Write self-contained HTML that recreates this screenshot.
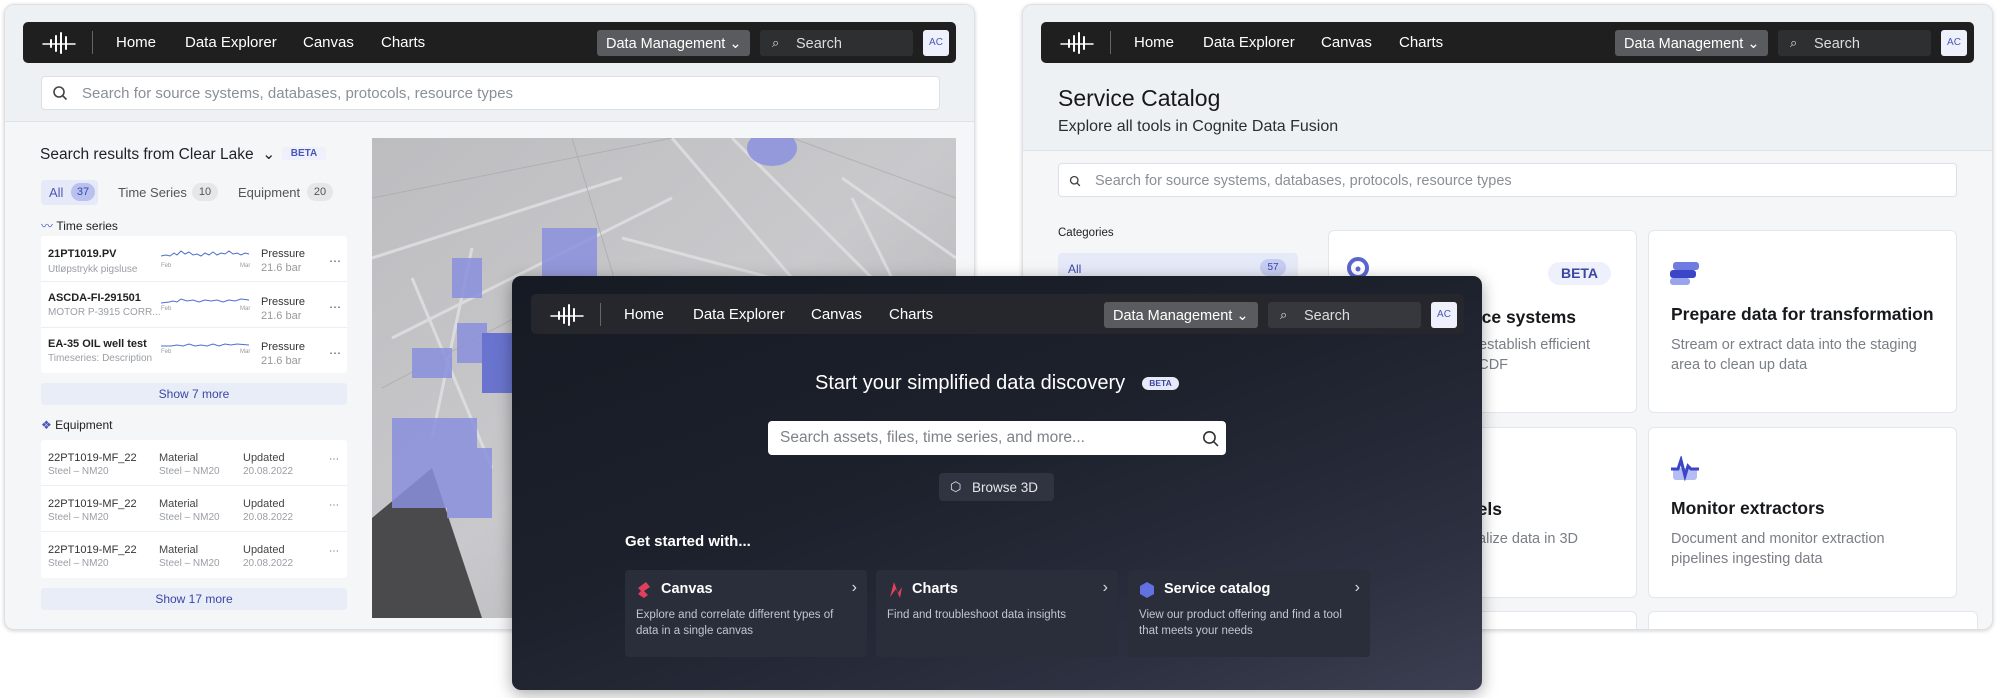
<!DOCTYPE html>
<html><head><meta charset="utf-8"><style>
*{box-sizing:border-box;margin:0;padding:0}
body{width:2000px;height:698px;background:#fff;position:relative;overflow:hidden;font-family:"Liberation Sans",sans-serif;color:#1f2328}
.a{position:absolute}
.win{position:absolute;border-radius:10px;overflow:hidden;box-shadow:0 1px 4px rgba(0,0,0,.18);border:1px solid #dde0e4}
.nav{position:absolute;background:#1f1f20;border-radius:5px;height:41px;color:#fff;font-size:15px}
.nav .t{position:absolute;top:12px;white-space:nowrap}
.dm{position:absolute;top:8px;height:26px;background:#5a5b5e;border-radius:3px;color:#fff;font-size:14.5px;padding:6px 9px;white-space:nowrap}
.srch{position:absolute;top:8px;height:26px;background:#2e2f31;border-radius:3px;font-size:14.5px;color:#ddd;padding:6px 0 0 36px}
.ac{position:absolute;top:8px;width:26px;height:26px;background:#eef0fb;border-radius:3px;color:#4a57b8;font-size:10px;text-align:center;line-height:26px}
.sb{position:absolute;background:#fff;border:1px solid #dcdfe3;border-radius:4px;color:#8a8f96;font-size:15px}
.row{position:absolute;left:0;right:0;height:46px;border-bottom:1px solid #eceef0}
.n{position:absolute;font-size:11px;color:#222;font-weight:bold;white-space:nowrap}
.s{position:absolute;font-size:10px;color:#9a9ea4;white-space:nowrap}
.card{position:absolute;background:#fff;border:1px solid #e3e6ea;border-radius:6px;overflow:hidden}
.ct{position:absolute;left:22px;font-size:17.5px;font-weight:bold;color:#16181c;white-space:nowrap}
.cd{position:absolute;left:22px;font-size:14.5px;color:#7a7e85;line-height:20px;white-space:nowrap}
.dc{position:absolute;background:#2a2e3a;border-radius:4px;width:242px;height:87px;top:570px}
.dc .tt{position:absolute;left:36px;top:11px;color:#fff;font-size:14.5px;font-weight:bold}
.dc .dd{position:absolute;left:11px;top:37px;color:#c3c6ce;font-size:11.5px;line-height:16px;width:220px}
.dc .ch{position:absolute;right:10px;top:9px;color:#ddd;font-size:16px}
</style></head><body>

<!-- LEFT WINDOW -->
<div class="win" style="left:4px;top:4px;width:971px;height:626px;background:#f5f6f8">
  <div class="a" style="left:0;top:0;width:971px;height:117px;background:#eef1f4;border-bottom:1px solid #dfe2e6"></div>
  <div class="nav" style="left:18px;top:17px;width:933px">
    <svg class="a" style="left:18px;top:9px" width="38" height="24" viewBox="0 0 38 24"><g stroke="#fff" stroke-width="2" stroke-linecap="round"><line x1="10" y1="9" x2="10" y2="16"/><line x1="15" y1="5" x2="15" y2="20"/><line x1="20" y1="2" x2="20" y2="22"/><line x1="25" y1="6" x2="25" y2="18"/><path d="M2 13 H34" stroke-width="1.5"/></g></svg>
    <div class="a" style="left:69px;top:9px;width:1px;height:23px;background:#666"></div>
    <span class="t" style="left:93px">Home</span><span class="t" style="left:162px">Data Explorer</span><span class="t" style="left:280px">Canvas</span><span class="t" style="left:358px">Charts</span>
    <div class="dm" style="left:574px;width:153px">Data Management ⌄</div>
    <div class="srch" style="left:737px;width:153px">Search<span class="a" style="left:12px;top:5px;font-size:13px">⌕</span></div>
    <div class="ac" style="left:900px">AC</div>
  </div>
  <div class="sb" style="left:36px;top:71px;width:899px;height:34px;padding:8px 0 0 40px">Search for source systems, databases, protocols, resource types<svg class="a" style="left:10px;top:8px" width="16" height="16" viewBox="0 0 16 16"><circle cx="7" cy="7" r="5" stroke="#444" stroke-width="1.6" fill="none"/><line x1="11" y1="11" x2="14.5" y2="14.5" stroke="#444" stroke-width="1.6"/></svg></div>

  <div class="a" style="left:35px;top:140px;font-size:15.5px;color:#1e2126">Search results from Clear Lake &nbsp;⌄</div>
  <div class="a" style="left:277px;top:142px;width:44px;height:13px;background:#eef0fb;border-radius:3px;color:#4a57b8;font-size:10px;font-weight:bold;text-align:center;line-height:13px">BETA</div>
  <div class="a" style="left:36px;top:175px;width:57px;height:25px;background:#e6eaf8;border-radius:4px"></div>
  <div class="a" style="left:44px;top:180px;font-size:13px;color:#4a57b8">All</div>
  <div class="a" style="left:66px;top:178px;width:24px;height:18px;background:#b9c1ee;border-radius:9px;font-size:11px;color:#3a46a6;text-align:center;line-height:18px">37</div>
  <div class="a" style="left:113px;top:180px;font-size:13px;color:#555">Time Series</div>
  <div class="a" style="left:187px;top:178px;width:26px;height:18px;background:#e6e7e9;border-radius:9px;font-size:11px;color:#555;text-align:center;line-height:18px">10</div>
  <div class="a" style="left:233px;top:180px;font-size:13px;color:#555">Equipment</div>
  <div class="a" style="left:302px;top:178px;width:26px;height:18px;background:#e6e7e9;border-radius:9px;font-size:11px;color:#555;text-align:center;line-height:18px">20</div>
  <div class="a" style="left:36px;top:212px;font-size:12px;color:#222"><span style="color:#4a57b8">〰</span> Time series</div>

  <div class="a" style="left:36px;top:231px;width:306px;height:137px;background:#fff;border-radius:3px">
    <div class="row" style="top:0"><div class="n" style="left:7px;top:12px">21PT1019.PV</div><div class="s" style="left:7px;top:28px">Utløpstrykk pigsluse</div></div>
    <div class="row" style="top:46px"><div class="n" style="left:7px;top:10px">ASCDA-FI-291501</div><div class="s" style="left:7px;top:25px">MOTOR P-3915 CORR...</div></div>
    <div class="row" style="top:92px;border:0"><div class="n" style="left:7px;top:10px">EA-35 OIL well test</div><div class="s" style="left:7px;top:25px">Timeseries: Description</div></div>
  </div>
  <svg class="a" style="left:156px;top:245px" width="95" height="115" viewBox="0 0 95 115"><g fill="none" stroke="#4a6fd0" stroke-width="1"><path d="M0 6 L5 5 L9 6 L13 3 L16 5 L20 1 L24 4 L28 2 L32 5 L36 4 L40 6 L44 3 L48 5 L52 2 L56 5 L60 3 L64 4 L68 1 L72 4 L76 3 L80 5 L84 3 L88 4"/><path d="M0 53 L8 52 L12 51 L16 52 L20 49 L26 51 L32 50 L38 52 L44 50 L50 51 L56 50 L62 52 L68 50 L74 51 L80 49 L88 50"/><path d="M0 96 L10 96 L16 95 L22 96 L28 94 L34 96 L40 95 L46 96 L52 94 L58 96 L64 94 L70 95 L76 94 L88 95"/></g><g font-size="6" fill="#999" font-family="Liberation Sans"><text x="0" y="17">Feb</text><text x="79" y="17">Mar</text><text x="0" y="60">Feb</text><text x="79" y="60">Mar</text><text x="0" y="103">Feb</text><text x="79" y="103">Mar</text></g></svg>
  <div class="a" style="left:256px;top:242px;font-size:11px;color:#333;line-height:14px">Pressure<br><span style="color:#999">21.6 bar</span></div>
  <div class="a" style="left:256px;top:290px;font-size:11px;color:#333;line-height:14px">Pressure<br><span style="color:#999">21.6 bar</span></div>
  <div class="a" style="left:256px;top:335px;font-size:11px;color:#333;line-height:14px">Pressure<br><span style="color:#999">21.6 bar</span></div>
  <div class="a" style="left:324px;top:233px;font-size:12px;color:#555;line-height:46px">⋯<br>⋯<br>⋯</div>
  <div class="a" style="left:36px;top:378px;width:306px;height:22px;background:#e9edf8;border-radius:3px;font-size:12px;color:#3a46a6;text-align:center;line-height:22px">Show 7 more</div>

  <div class="a" style="left:36px;top:413px;font-size:12px;color:#222"><span style="color:#4a57b8">❖</span> Equipment</div>
  <div class="a" style="left:36px;top:435px;width:306px;height:138px;background:#fff;border-radius:3px">
    <div class="row" style="top:0"><div class="n" style="left:7px;top:12px;font-weight:normal;color:#333">22PT1019-MF_22</div><div class="s" style="left:7px;top:26px">Steel – NM20</div><div class="n" style="left:118px;top:12px;font-weight:normal;color:#444">Material</div><div class="s" style="left:118px;top:26px">Steel – NM20</div><div class="n" style="left:202px;top:12px;font-weight:normal;color:#444">Updated</div><div class="s" style="left:202px;top:26px">20.08.2022</div><div class="s" style="left:288px;top:14px;color:#555">⋯</div></div>
    <div class="row" style="top:46px"><div class="n" style="left:7px;top:12px;font-weight:normal;color:#333">22PT1019-MF_22</div><div class="s" style="left:7px;top:26px">Steel – NM20</div><div class="n" style="left:118px;top:12px;font-weight:normal;color:#444">Material</div><div class="s" style="left:118px;top:26px">Steel – NM20</div><div class="n" style="left:202px;top:12px;font-weight:normal;color:#444">Updated</div><div class="s" style="left:202px;top:26px">20.08.2022</div><div class="s" style="left:288px;top:14px;color:#555">⋯</div></div>
    <div class="row" style="top:92px;border:0"><div class="n" style="left:7px;top:12px;font-weight:normal;color:#333">22PT1019-MF_22</div><div class="s" style="left:7px;top:26px">Steel – NM20</div><div class="n" style="left:118px;top:12px;font-weight:normal;color:#444">Material</div><div class="s" style="left:118px;top:26px">Steel – NM20</div><div class="n" style="left:202px;top:12px;font-weight:normal;color:#444">Updated</div><div class="s" style="left:202px;top:26px">20.08.2022</div><div class="s" style="left:288px;top:14px;color:#555">⋯</div></div>
  </div>
  <div class="a" style="left:36px;top:583px;width:306px;height:22px;background:#e9edf8;border-radius:3px;font-size:12px;color:#3a46a6;text-align:center;line-height:22px">Show 17 more</div>

  <!-- 3D -->
  <svg class="a" style="left:367px;top:133px" width="584" height="480" viewBox="0 0 584 480">
    <defs><linearGradient id="g3" x1="0" y1="0" x2="1" y2="1"><stop offset="0" stop-color="#bdbdc0"/><stop offset=".5" stop-color="#c9c9cc"/><stop offset="1" stop-color="#a9a9ad"/></linearGradient></defs>
    <rect width="584" height="480" fill="url(#g3)"/>
    <polygon points="0,380 60,330 110,480 0,480" fill="#4a4a4d"/>
    <g stroke="#e2e2e4" stroke-width="3" fill="none" opacity=".8"><path d="M0 120 L250 40"/><path d="M20 200 L300 60"/><path d="M40 140 L120 330"/><path d="M100 110 L60 300"/><path d="M300 0 L420 140"/><path d="M360 0 L500 140"/><path d="M470 40 L584 120"/><path d="M480 60 L520 140 L584 140"/><path d="M250 100 L400 140"/></g>
    <g stroke="#a8a8ac" stroke-width="1" fill="none" opacity=".7"><path d="M0 60 L300 0"/><path d="M10 250 L200 150"/><path d="M200 0 L260 200"/><path d="M420 0 L584 60"/></g>
    <g fill="#8a90dd" opacity=".85"><rect x="80" y="120" width="30" height="40"/><rect x="170" y="90" width="55" height="50"/><ellipse cx="400" cy="10" rx="25" ry="18"/><rect x="85" y="185" width="30" height="40"/><rect x="110" y="195" width="45" height="60" fill="#5a66d0"/><rect x="140" y="170" width="20" height="50"/><rect x="20" y="280" width="85" height="90"/><rect x="75" y="310" width="45" height="70"/><rect x="40" y="210" width="40" height="30"/></g>
  </svg>
</div>

<!-- RIGHT WINDOW -->
<div class="win" style="left:1022px;top:4px;width:971px;height:626px;background:#f5f6f8">
  <div class="a" style="left:0;top:0;width:971px;height:146px;background:#eef1f4;border-bottom:1px solid #dfe2e6"></div>
  <div class="nav" style="left:18px;top:17px;width:933px">
    <svg class="a" style="left:18px;top:9px" width="38" height="24" viewBox="0 0 38 24"><g stroke="#fff" stroke-width="2" stroke-linecap="round"><line x1="10" y1="9" x2="10" y2="16"/><line x1="15" y1="5" x2="15" y2="20"/><line x1="20" y1="2" x2="20" y2="22"/><line x1="25" y1="6" x2="25" y2="18"/><path d="M2 13 H34" stroke-width="1.5"/></g></svg>
    <div class="a" style="left:69px;top:9px;width:1px;height:23px;background:#666"></div>
    <span class="t" style="left:93px">Home</span><span class="t" style="left:162px">Data Explorer</span><span class="t" style="left:280px">Canvas</span><span class="t" style="left:358px">Charts</span>
    <div class="dm" style="left:574px;width:153px">Data Management ⌄</div>
    <div class="srch" style="left:737px;width:153px">Search<span class="a" style="left:12px;top:5px;font-size:13px">⌕</span></div>
    <div class="ac" style="left:900px">AC</div>
  </div>
  <div class="a" style="left:35px;top:80px;font-size:23px;color:#16181c">Service Catalog</div>
  <div class="a" style="left:35px;top:113px;font-size:16px;color:#2a2d33">Explore all tools in Cognite Data Fusion</div>
  <div class="sb" style="left:35px;top:158px;width:899px;height:34px;padding:9px 0 0 36px;font-size:14.5px">Search for source systems, databases, protocols, resource types<svg class="a" style="left:10px;top:11px" width="12" height="12" viewBox="0 0 16 16"><circle cx="7" cy="7" r="5" stroke="#444" stroke-width="1.8" fill="none"/><line x1="11" y1="11" x2="14.5" y2="14.5" stroke="#444" stroke-width="1.8"/></svg></div>
  <div class="a" style="left:35px;top:222px;font-size:11.5px;color:#222">Categories</div>
  <div class="a" style="left:35px;top:248px;width:240px;height:30px;background:#e6eaf8;border-radius:4px"><span class="a" style="left:10px;top:9px;font-size:12px;color:#3a46a6">All</span><span class="a" style="left:202px;top:6px;width:26px;height:17px;background:#c6cdf2;border-radius:9px;font-size:10px;color:#3a46a6;text-align:center;line-height:17px">57</span></div>
  <div class="card" style="left:305px;top:225px;width:309px;height:183px">
    <svg class="a" style="left:18px;top:26px" width="22" height="22"><circle cx="11" cy="11" r="9" fill="none" stroke="#5a66d0" stroke-width="4"/><circle cx="11" cy="12" r="2.5" fill="#5a66d0"/></svg>
    <div class="a" style="left:219px;top:31px;width:63px;height:23px;background:#eef0fb;border-radius:12px;color:#3a46a6;font-size:14px;font-weight:bold;text-align:center;line-height:23px">BETA</div>
    <div class="ct" style="left:auto;right:60px;top:76px">Connect to source systems</div>
    <div class="cd" style="left:auto;right:46px;top:104px;text-align:left">Integrate and establish efficient<br><span style="padding-left:0">pipelines into CDF</span></div>
  </div>
  <div class="card" style="left:625px;top:225px;width:309px;height:183px">
    <svg class="a" style="left:21px;top:29px" width="30" height="28"><rect x="3" y="2" width="26" height="8" rx="3" fill="#6f7be0"/><rect x="0" y="10" width="26" height="8" rx="3" fill="#3a46c6"/><rect x="0" y="18" width="20" height="7" rx="3" fill="#9aa3ee"/></svg>
    <div class="ct" style="top:73px">Prepare data for transformation</div>
    <div class="cd" style="top:104px">Stream or extract data into the staging<br>area to clean up data</div>
  </div>
  <div class="card" style="left:305px;top:422px;width:309px;height:171px">
    <div class="ct" style="left:auto;right:134px;top:71px">3D models</div>
    <div class="cd" style="left:auto;right:58px;top:101px">Visualize data in 3D</div>
  </div>
  <div class="card" style="left:625px;top:422px;width:309px;height:171px">
    <svg class="a" style="left:22px;top:28px" width="28" height="26"><rect x="2" y="12" width="24" height="12" rx="3" fill="#b6bdf3"/><path d="M0 13 H7 L10 4 L14 20 L17 10 L20 13 H28" stroke="#3a46c6" stroke-width="3" fill="none"/></svg>
    <div class="ct" style="top:70px">Monitor extractors</div>
    <div class="cd" style="top:101px">Document and monitor extraction<br>pipelines ingesting data</div>
  </div>
  <div class="card" style="left:305px;top:606px;width:309px;height:40px"></div>
  <div class="card" style="left:625px;top:606px;width:330px;height:40px"></div>
</div>

<!-- DARK WINDOW -->
<div class="a" style="left:512px;top:276px;width:970px;height:414px;border-radius:9px;overflow:hidden;background:linear-gradient(160deg,#161a23 0%,#1d212c 45%,#2c3040 80%,#3b3f51 100%);box-shadow:0 4px 16px rgba(0,0,0,.35)">
  <div class="nav" style="left:19px;top:18px;width:933px;height:40px;background:#25272c">
    <svg class="a" style="left:18px;top:9px" width="38" height="24" viewBox="0 0 38 24"><g stroke="#fff" stroke-width="2" stroke-linecap="round"><line x1="10" y1="9" x2="10" y2="16"/><line x1="15" y1="5" x2="15" y2="20"/><line x1="20" y1="2" x2="20" y2="22"/><line x1="25" y1="6" x2="25" y2="18"/><path d="M2 13 H34" stroke-width="1.5"/></g></svg>
    <div class="a" style="left:69px;top:9px;width:1px;height:23px;background:#666"></div>
    <span class="t" style="left:93px">Home</span><span class="t" style="left:162px">Data Explorer</span><span class="t" style="left:280px">Canvas</span><span class="t" style="left:358px">Charts</span>
    <div class="dm" style="left:573px;width:154px">Data Management ⌄</div>
    <div class="srch" style="left:737px;width:153px;background:#36383d">Search<span class="a" style="left:12px;top:5px;font-size:13px">⌕</span></div>
    <div class="ac" style="left:900px">AC</div>
  </div>
  <div class="a" style="left:303px;top:96px;font-size:20px;color:#fff;white-space:nowrap">Start your simplified data discovery</div>
  <div class="a" style="left:630px;top:101px;width:37px;height:13px;background:#e6eaf8;border-radius:7px;color:#3a46a6;font-size:8.5px;font-weight:bold;text-align:center;line-height:13px">BETA</div>
  <div class="a" style="left:256px;top:145px;width:458px;height:34px;background:#fff;border-radius:4px;color:#7d8189;font-size:15.5px;padding:8px 0 0 12px">Search assets, files, time series, and more...<svg class="a" style="left:434px;top:9px" width="17" height="17" viewBox="0 0 16 16"><circle cx="7" cy="7" r="5.3" stroke="#333" stroke-width="1.5" fill="none"/><line x1="11" y1="11" x2="15" y2="15" stroke="#333" stroke-width="1.5"/></svg></div>
  <div class="a" style="left:427px;top:197px;width:115px;height:28px;background:#2f3440;border-radius:4px;color:#e6e7ea;font-size:13.5px;padding:7px 0 0 33px">Browse 3D<span class="a" style="left:11px;top:6px;font-size:13px">⬡</span></div>
  <div class="a" style="left:113px;top:257px;font-size:15px;color:#fff;font-weight:bold">Get started with...</div>
  <div class="dc" style="left:113px;top:294px">
    <svg class="a" style="left:11px;top:12px" width="16" height="16"><path d="M10 0 L2 6 L5 9 L2 12 L8 16 L12 13 L8 9 L14 5 Z" fill="#e0405c"/></svg>
    <div class="tt">Canvas</div><div class="ch">›</div><div class="dd">Explore and correlate different types of data in a single canvas</div></div>
  <div class="dc" style="left:364px;top:294px">
    <svg class="a" style="left:11px;top:11px" width="18" height="18"><path d="M3 16 L7 1 L11 12 L15 6 L13 17 L9 8 Z" fill="#e0405c"/></svg>
    <div class="tt">Charts</div><div class="ch">›</div><div class="dd">Find and troubleshoot data insights</div></div>
  <div class="dc" style="left:616px;top:294px">
    <svg class="a" style="left:11px;top:12px" width="16" height="16"><polygon points="8,0 15,4 15,12 8,16 1,12 1,4" fill="#6270e0"/></svg>
    <div class="tt">Service catalog</div><div class="ch">›</div><div class="dd">View our product offering and find a tool that meets your needs</div></div>
</div>
</body></html>
